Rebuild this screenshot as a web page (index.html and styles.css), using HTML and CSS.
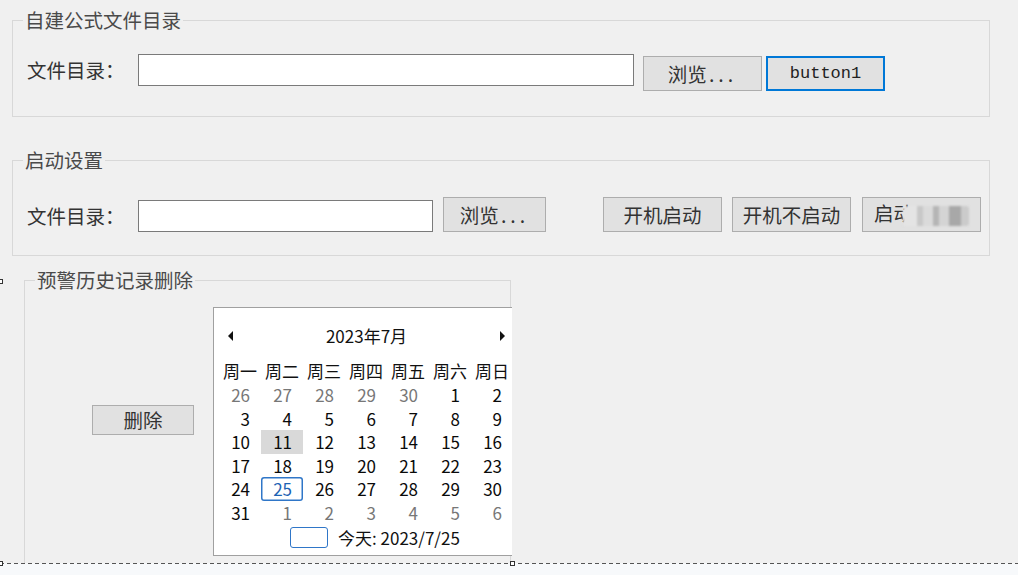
FILE: index.html
```html
<!DOCTYPE html>
<html lang="zh-CN">
<head>
<meta charset="utf-8">
<title>设置</title>
<link rel="stylesheet" href="styles.css">
</head>
<body>
<div class="surface">
  <fieldset class="group g1">
    <legend>自建公式文件目录</legend>
    <div class="row">
      <span class="label">文件目录：</span>
      <input class="path path-wide" type="text">
      <button class="btn btn-browse">浏览<span class="dots">...</span></button>
      <button class="btn btn-focus">button1</button>
    </div>
  </fieldset>

  <fieldset class="group g2">
    <legend>启动设置</legend>
    <div class="row">
      <span class="label">文件目录：</span>
      <input class="path path-short" type="text">
      <button class="btn btn-browse2">浏览<span class="dots">...</span></button>
      <button class="btn btn-boot">开机启动</button>
      <button class="btn btn-noboot">开机不启动</button>
      <button class="btn btn-other">启动<span class="mosaic"></span></button>
    </div>
  </fieldset>

  <fieldset class="group g3">
    <legend>预警历史记录删除</legend>
    <div class="row row3">
      <button class="btn btn-delete">删除</button>
      <div class="calendar">
        <div class="cal-inner">
          <div class="cal-head">
            <span class="arrow arrow-left"></span>
            <span class="cal-title">2023年7月</span>
            <span class="arrow arrow-right"></span>
          </div>
          <div class="cal-week">
            <span>周一</span><span>周二</span><span>周三</span><span>周四</span><span>周五</span><span>周六</span><span>周日</span>
          </div>
          <div class="cal-days">
            <span class="day other">26</span><span class="day other">27</span><span class="day other">28</span><span class="day other">29</span><span class="day other">30</span><span class="day">1</span><span class="day">2</span>
            <span class="day">3</span><span class="day">4</span><span class="day">5</span><span class="day">6</span><span class="day">7</span><span class="day">8</span><span class="day">9</span>
            <span class="day">10</span><span class="day hl">11</span><span class="day">12</span><span class="day">13</span><span class="day">14</span><span class="day">15</span><span class="day">16</span>
            <span class="day">17</span><span class="day">18</span><span class="day">19</span><span class="day">20</span><span class="day">21</span><span class="day">22</span><span class="day">23</span>
            <span class="day">24</span><span class="day today">25</span><span class="day">26</span><span class="day">27</span><span class="day">28</span><span class="day">29</span><span class="day">30</span>
            <span class="day">31</span><span class="day other">1</span><span class="day other">2</span><span class="day other">3</span><span class="day other">4</span><span class="day other">5</span><span class="day other">6</span>
          </div>
          <div class="cal-today">
            <span class="today-box"></span>
            <span class="today-text">今天: 2023/7/25</span>
          </div>
        </div>
      </div>
    </div>
  </fieldset>
  <span class="handle handle-left"></span>
</div>
<div class="edge">
  <span class="handle handle-b1"></span>
  <span class="handle handle-b2"></span>
</div>
</body>
</html>
```

FILE: styles.css
```css
html, body {
  margin: 0;
  padding: 0;
}
body {
  width: 1018px;
  height: 575px;
  overflow: hidden;
  background: #f0f0f0;
  font-family: "Noto Sans CJK SC", "Noto Sans", sans-serif;
  color: #333;
}

.surface {
  height: 563px;
  overflow: hidden;
  position: relative;
}

/* group boxes */
.group {
  border: 1px solid #d8d8d8;
  padding: 0;
  min-width: 0;
  box-sizing: border-box;
}
.group legend {
  margin-left: 10px;
  padding: 0 2px;
  font-size: 19.5px;
  line-height: 20px;
  color: #4a4a4a;
}
.g1 {
  margin: 10px 28px 0 12px;
}
.g2 {
  margin: 33px 28px 0 12px;
}
.g3 {
  margin: 14px 0 0 24px;
  width: 487px;
  padding-bottom: 100px;
}

.row {
  display: flex;
  align-items: flex-start;
}
.g1 .row {
  padding: 24px 0 25px 14px;
}
.g2 .row {
  padding: 27px 0 23px 14px;
}
.row3 {
  padding-left: 67px;
}

.label {
  flex-shrink: 0;
  width: 111px;
  line-height: 32px;
  font-size: 19.5px;
  color: #333;
}
.g2 .label,
.g2 .path {
  margin-top: 3px;
}

.path {
  flex-shrink: 0;
  height: 32px;
  margin: 0;
  padding: 0;
  border: 1px solid #7a7a7a;
  background: #fff;
  box-sizing: border-box;
  outline: none;
}
.path-wide {
  width: 496px;
}
.path-short {
  width: 295px;
}

/* buttons */
.btn {
  flex-shrink: 0;
  box-sizing: border-box;
  height: 35px;
  margin: 0;
  padding: 0;
  border: 1px solid #adadad;
  background: #e1e1e1;
  font-family: inherit;
  font-size: 19.5px;
  line-height: 1;
  color: #333;
  white-space: nowrap;
}
.dots {
  letter-spacing: 4px;
  margin-left: 2px;
}
.btn-browse {
  margin: 2px 0 0 9px;
  width: 119px;
}
.btn-focus {
  margin: 2px 0 0 4px;
  width: 119px;
  border: 2px solid #0078d7;
  font-family: "Liberation Mono", monospace;
  font-size: 17px;
  color: #222;
}
.btn-browse2 {
  margin-left: 10px;
  width: 103px;
}
.btn-boot {
  margin-left: 57px;
  width: 119px;
}
.btn-noboot {
  margin-left: 10px;
  width: 119px;
}
.btn-other {
  margin-left: 11px;
  width: 119px;
}
.mosaic {
  display: inline-block;
  vertical-align: middle;
  width: 66px;
  height: 20px;
  margin-left: -10px;
  background:
    linear-gradient(90deg,
      #e4e4e4 0 14px, #c8c8c8 14px 20px, #dadada 20px 30px,
      #b5b5b5 30px 36px, #d4d4d4 36px 46px, #a8a8a8 46px 58px, #cbcbcb 58px 66px);
  filter: blur(1.2px);
  border-radius: 3px;
}

.btn-delete {
  width: 102px;
  height: 30px;
  margin-top: 115px;
}

/* calendar */
.calendar {
  flex-shrink: 0;
  box-sizing: border-box;
  width: 299px;
  margin: 17px 0 0 19px;
  border: 1px solid #a0a0a0;
  border-right: 0;
  background: #fff;
  overflow: hidden;
  color: #111;
  font-size: 17px;
}
.cal-inner {
  width: 304px;
  box-sizing: border-box;
  padding: 16px 5px 6px 5px;
}
.cal-head {
  display: flex;
  justify-content: space-between;
  align-items: center;
  height: 24px;
  padding: 0 8px 0 9px;
  line-height: 24px;
}
.arrow {
  width: 0;
  height: 0;
  border-top: 5px solid transparent;
  border-bottom: 5px solid transparent;
}
.arrow-left {
  border-right: 5px solid #111;
}
.arrow-right {
  border-left: 5px solid #111;
}
.cal-title {
  color: #111;
}
.cal-week {
  display: grid;
  grid-template-columns: repeat(7, 42px);
  margin-top: 11px;
  height: 24px;
  line-height: 24px;
  text-align: center;
}
.cal-days {
  display: grid;
  grid-template-columns: repeat(7, 42px);
  grid-auto-rows: 23.6px;
}
.day {
  text-align: right;
  padding-right: 11px;
  line-height: 23.6px;
  color: #0a0a0a;
}
.day.other {
  color: #777;
}
.day.hl {
  background: #d9d9d9;
}
.day.today {
  color: #1e63b4;
  border-radius: 3px;
  box-shadow: inset 0 0 0 1.5px #2f76c8;
}
.cal-today {
  display: flex;
  align-items: center;
  height: 23px;
  margin-top: 1.4px;
  padding-left: 71px;
}
.today-box {
  width: 38px;
  height: 21px;
  box-sizing: border-box;
  border: 1.5px solid #2f76c8;
  border-radius: 3px;
  margin-right: 10px;
}
.today-text {
  line-height: 23px;
  color: #111;
}

/* designer surface edge */
.edge {
  position: relative;
  height: 12px;
  background: #f7f9fb;
}
.edge::before {
  content: "";
  display: block;
  height: 1px;
  background: repeating-linear-gradient(90deg, #555 0 4px, transparent 4px 7px);
}
.handle {
  position: absolute;
  width: 5px;
  height: 5px;
  box-sizing: border-box;
  border: 1px solid #333;
  background: #fff;
}
.handle-left {
  left: -2px;
  top: 279px;
}
.handle-b1 {
  left: -2px;
  top: -2px;
}
.handle-b2 {
  left: 510px;
  top: -2px;
}
```
